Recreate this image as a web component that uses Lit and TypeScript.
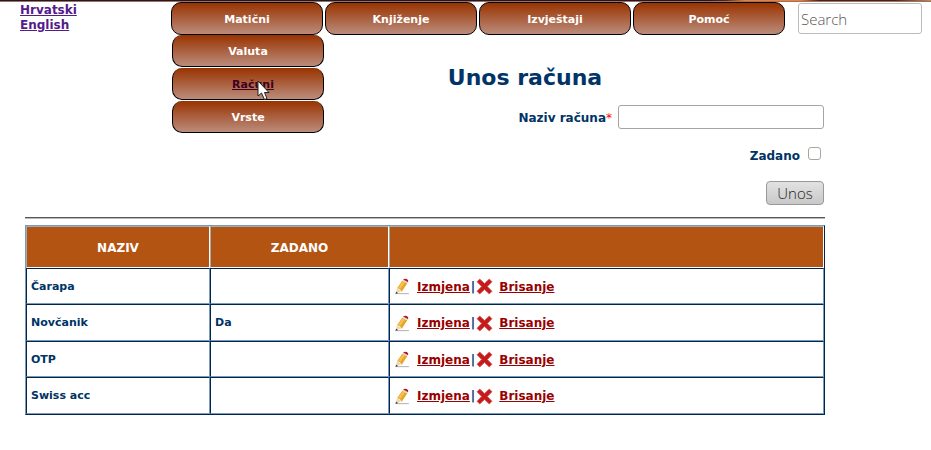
import { LitElement, html, css } from "lit";
import { customElement, property } from "lit/decorators.js";

const MENU = [
  { label: "Matični", items: ["Valuta", "Računi", "Vrste"] },
  { label: "Knjiženje", items: [] },
  { label: "Izvještaji", items: [] },
  { label: "Pomoć", items: [] },
];

@customElement("top-menu")
export class TopMenu extends LitElement {
  @property() active = "Računi";

  static styles = css`
    :host { display: block; }
    ul { list-style: none; margin: 0; padding: 0; }
    .bar { display: flex; gap: 2px; }
    .group { position: relative; }
    .item {
      display: flex;
      align-items: center;
      justify-content: center;
      box-sizing: border-box;
      width: 152px;
      height: 33px;
      padding-top: 2px;
      border: 1px solid #000;
      border-radius: 10px;
      background: linear-gradient(#993300, #bb8c7c);
      color: #fff;
      font: bold 11px/16px "DejaVu Sans", sans-serif;
      text-decoration: none;
    }
    .sub {
      position: absolute;
      top: 100%;
      left: 1px;
      display: flex;
      flex-direction: column;
      gap: 1px;
    }
    .sub .item { height: 32px; border-top: 0; }
    .sub .active { color: #400020; text-decoration: underline; padding-left: 10px; }
    .pointer { position: absolute; left: 86px; top: 78px; width: 13px; height: 21px; pointer-events: none; }
  `;

  render() {
    return html`<nav><ul class="bar">
      ${MENU.map((m) => html`<li class="group">
        <a class="item" href="#">${m.label}</a>
        ${m.items.length ? html`<ul class="sub">
          ${m.items.map((s) => html`<li><a class="item ${s === this.active ? "active" : ""}" href="#">${s}</a></li>`)}
        </ul>
        <svg class="pointer" viewBox="0 0 13 21" aria-hidden="true">
          <path d="M1 1V16L4.500 13L7.500 19.500L10 18.500L7.500 12.500H12Z" fill="#fff" stroke="#222" stroke-width="1"/>
        </svg>` : ""}
      </li>`)}
    </ul></nav>`;
  }
}

@customElement("account-table")
export class AccountTable extends LitElement {
  @property({ attribute: false }) rows: { name: string; def: string }[] = [];

  static styles = css`
    :host { display: block; }
    table {
      width: 100%;
      table-layout: fixed;
      border-collapse: separate;
      border-spacing: 0;
      box-sizing: border-box;
      border: 1px solid;
      border-color: #7a9ab5 #00264d #00264d #7a9ab5;
      color: #003366;
      font: bold 11px/16px "DejaVu Sans", sans-serif;
    }
    .name { width: 184px; }
    .flag { width: 179px; }
    th {
      box-sizing: border-box;
      height: 42px;
      padding: 2px 0 0;
      background: #b35412;
      border: 1px solid;
      border-color: #a7abae #fff #fff #a7abae;
      color: #fff;
      font-size: 12px;
    }
    td {
      box-sizing: border-box;
      height: 36px;
      padding: 1px 4px 0;
      border: 1px solid;
      border-color: #00264d #7a9ab5 #7a9ab5 #00264d;
    }
    tr:nth-child(even) td { height: 37px; }
    .actions { display: flex; align-items: center; font-size: 12px; }
    .actions svg { width: 17px; height: 17px; flex: none; }
    .actions a { color: #990000; }
    .edit { margin-left: 6px; }
    .bar { padding: 0 1px; }
    .remove { margin-left: 6px; }
  `;

  render() {
    return html`<table>
      <colgroup><col class="name"><col class="flag"><col></colgroup>
      <thead><tr><th>NAZIV</th><th>ZADANO</th><th></th></tr></thead>
      <tbody>${this.rows.map((r) => html`<tr>
        <td>${r.name}</td><td>${r.def}</td>
        <td><div class="actions">
          <svg viewBox="0 0 16 16" aria-hidden="true">
            <path d="M2 14.700H14" stroke="#b5b5b5" stroke-width="1"/>
            <path d="M3 9.500L1.500 14.500L7 12.500Z" fill="#ecd9b0"/>
            <path d="M2 13L1.300 15L3.800 14.200Z" fill="#333"/>
            <path d="M3 9.500L7.800 2.500L12.500 5L7.300 13Q6 10 3 9.500Z" fill="#e8a62a"/>
            <path d="M5 9.500L9.500 3.300" stroke="#f5c550" stroke-width="2"/>
            <path d="M7.800 2.500L8.700 1.300L13.300 3.700L12.500 5Z" fill="#dcdcdc"/>
            <path d="M8.600 1.400Q10 .2 12 1Q14 2 13.300 3.900Z" fill="#b3171b"/>
          </svg>
          <a class="edit" href="#">Izmjena</a><span class="bar">|</span>
          <svg viewBox="0 0 16 16" aria-hidden="true">
            <path d="M3.500 1L8 5.200L12.500 1L15 3.500L10.700 8L15 12.500L12.500 15L8 10.800L3.500 15L1 12.500L5.300 8L1 3.500Z" fill="#c41a1c" stroke="#d75555" stroke-width=".8"/>
          </svg>
          <a class="remove" href="#">Brisanje</a>
        </div></td>
      </tr>`)}</tbody>
    </table>`;
  }
}

@customElement("app-root")
export class AppRoot extends LitElement {
  private rows = [
    { name: "Čarapa", def: "" },
    { name: "Novčanik", def: "Da" },
    { name: "OTP", def: "" },
    { name: "Swiss acc", def: "" },
  ];

  static styles = css`
    :host { display: block; background: #fff; color: #003366; font: bold 12px/16px "DejaVu Sans", sans-serif; }
    .banner {
      height: 2px;
      box-sizing: border-box;
      border-bottom: 1px solid #8b7777;
      background: linear-gradient(90deg, #351010 0 76%, #662200 78%, #ff7a20 80% 86%, #5a1c05 88% 96%, #cc8844);
    }
    header { display: flex; align-items: flex-start; padding: 0 9px 0 20px; }
    .langs { display: flex; flex-direction: column; width: 151px; padding-top: 1px; line-height: 15px; }
    .langs a { color: #551a8b; }
    input, button { box-sizing: border-box; margin: 0; font: 300 15px/20px "Open Sans", sans-serif; }
    input[type="text"], input[type="search"] { background: #fff; border: 1px solid #a8a49e; border-radius: 3px; padding: 0 2px; }
    header .search[type="search"] { flex: 1; min-width: 0; height: 31px; margin: 1px 0 0 13px; border-color: #bbb; }
    .search::placeholder { color: #555; opacity: 1; }
    main { max-width: 800px; margin-left: 25px; }
    h1 { margin: 29px 0 0; padding-left: 200px; text-align: center; font-size: 22px; line-height: 28px; }
    form { display: flex; flex-direction: column; align-items: flex-end; padding-right: 1px; }
    .field { display: flex; align-items: center; gap: 6px; height: 24px; margin-top: 13px; }
    .field label { padding-top: 2px; }
    .req { color: #f00; font-weight: normal; }
    .name { width: 206px; height: 24px; }
    .check { gap: 8px; margin-top: 14px; padding-right: 3px; }
    .check input { appearance: none; width: 13px; height: 13px; margin-bottom: 4px; border: 1px solid #a8a49e; border-radius: 3px; background: #fff; }
    button { width: 58px; height: 24px; margin-top: 14px; padding: 0; border: 1px solid #999; border-radius: 4px; background: linear-gradient(#e2e2e2, #c8c8c8); color: #222; }
    hr { margin: 12px 0 6px; border: 0; border-top: 1px solid #555; border-bottom: 1px solid #bbb; }
  `;

  render() {
    return html`
      <div class="banner"></div>
      <header>
        <div class="langs"><a href="#">Hrvatski</a><a href="#">English</a></div>
        <top-menu></top-menu>
        <input class="search" type="search" placeholder="Search" aria-label="Search">
      </header>
      <main>
        <h1>Unos računa</h1>
        <form>
          <div class="field">
            <label for="name">Naziv računa<span class="req">*</span></label>
            <input id="name" class="name" type="text">
          </div>
          <div class="field check">
            <label for="def">Zadano</label>
            <input id="def" type="checkbox">
          </div>
          <button type="button">Unos</button>
        </form>
        <hr>
        <account-table .rows=${this.rows}></account-table>
      </main>`;
  }
}
